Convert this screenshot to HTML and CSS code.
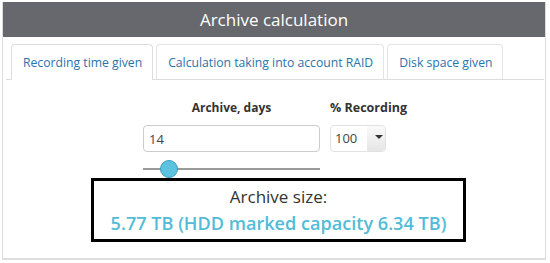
FILE: index.html
```html
<!DOCTYPE html>
<html>

<head>
    <title>Archive calculation</title>
    <link rel="stylesheet" href="styles.css">
</head>

<body>
    <div class="panel">
        <div class="panel-head">Archive calculation</div>

        <ul class="tabs">
            <li class="tab active">Recording time given</li>
            <li class="tab">Calculation taking into account RAID</li>
            <li class="tab">Disk space given</li>
        </ul>

        <div class="calc">
            <div class="field days">
                <label>Archive, days</label>
                <input class="days-input" value="14">
                <div class="slider">
                    <div class="track"></div>
                    <div class="thumb"></div>
                </div>
            </div>
            <div class="field percent">
                <label>% Recording</label>
                <div class="select">
                    <span class="select-value">100</span>
                    <span class="select-caret"></span>
                </div>
            </div>
        </div>

        <div class="result">
            <div class="result-title">Archive size:</div>
            <div class="result-value">5.77 TB (HDD marked capacity 6.34 TB)</div>
        </div>
    </div>
</body>

</html>
```

FILE: styles.css
```css
body {
    margin: 0;
    background-color: white;
    font-family: "Open Sans", "Liberation Sans", sans-serif;
    color: #333;
}

.panel {
    margin: 2px 0 0 2px;
    width: 542px;
    height: 256px;
    border: 1px solid #ddd;
    border-top: none;
    border-bottom: 2px solid #ddd;
}

.panel-head {
    height: 35px;
    line-height: 36px;
    background-color: #66686d;
    color: white;
    text-align: center;
    font-size: 17px;
}

.tabs {
    list-style: none;
    margin: 7px 1px 0 3px;
    padding: 0 0 0 5px;
    display: flex;
    gap: 3px;
    border-bottom: 1px solid #ddd;
}

.tab {
    height: 34px;
    line-height: 35px;
    padding: 0 10px 0 11px;
    white-space: nowrap;
    border: 1px solid #e4e4e4;
    border-bottom: none;
    border-radius: 4px 4px 0 0;
    font-size: 12.2px;
    color: #2b72ad;
    margin-bottom: -1px;
}

.tab.active {
    background-color: white;
    border-color: #ddd;
    height: 35px;
}

.calc {
    display: flex;
    padding-left: 140px;
    margin-top: 19px;
}

.field label {
    display: block;
    font-size: 12px;
    font-weight: bold;
    height: 20px;
    white-space: nowrap;
}

.days {
    width: 177px;
    text-align: center;
}

.days-input {
    display: block;
    box-sizing: border-box;
    width: 177px;
    height: 27px;
    margin-top: 6px;
    padding: 0 5px;
    border: 1px solid #ccc;
    border-radius: 4px;
    font-family: "Open Sans", "Liberation Sans", sans-serif;
    font-size: 13px;
    color: #444;
}

.slider {
    position: relative;
    height: 18px;
    margin-top: 8px;
}

.track {
    position: absolute;
    left: 0;
    right: 0;
    top: 8px;
    height: 2px;
    background-color: #9a9a9a;
}

.thumb {
    position: absolute;
    left: 17px;
    top: 0;
    width: 16px;
    height: 16px;
    border-radius: 50%;
    background-color: #5bc3df;
    border: 1px solid #3f9cb8;
}

.percent {
    margin-left: 10px;
}

.percent label {
    font-size: 12.5px;
}

.select {
    display: flex;
    width: 56px;
    height: 27px;
    margin-top: 6px;
    box-sizing: border-box;
    border: 1px solid #e2e2e2;
    border-radius: 4px;
    font-size: 13px;
    color: #444;
}

.select-value {
    width: 32px;
    line-height: 25px;
    padding-left: 4px;
}

.select-caret {
    flex: 1;
    border-radius: 0 4px 4px 0;
    background: linear-gradient(#fafafa, #e6e6e6);
    position: relative;
}

.select-caret::after {
    content: "";
    position: absolute;
    left: 8px;
    top: 9px;
    border-left: 4px solid transparent;
    border-right: 4px solid transparent;
    border-top: 4px solid #333;
}

.result {
    box-sizing: border-box;
    width: 375px;
    height: 64px;
    margin: 0 0 0 88px;
    border: 3px solid black;
    text-align: center;
}

.result-title {
    font-size: 17px;
    margin-top: 4px;
    line-height: 24px;
}

.result-value {
    font-size: 18.1px;
    font-weight: 600;
    color: #52bcd8;
    line-height: 28px;
}
```
